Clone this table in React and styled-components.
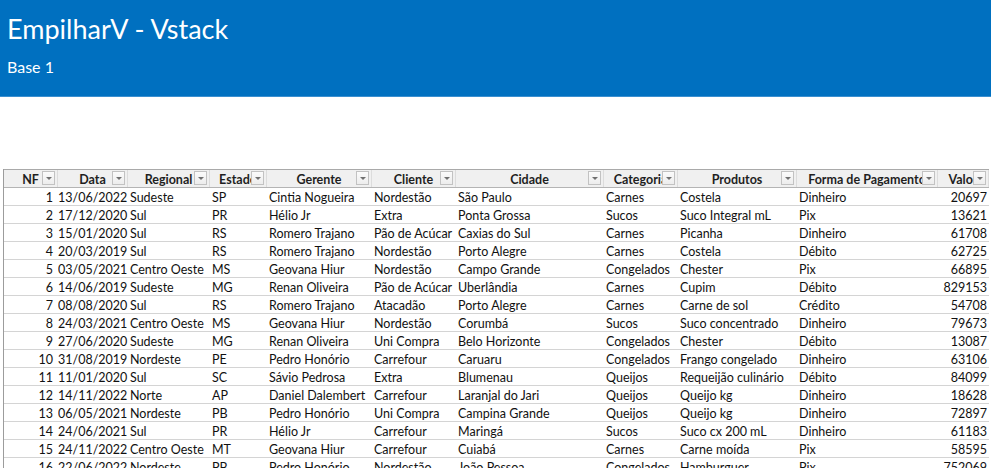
import React from "react";
import styled, { createGlobalStyle } from "styled-components";

const Global = createGlobalStyle`
  html, body { margin: 0; padding: 0; background: #ffffff; }
  body { font-family: Lato, "Open Sans", Arial, sans-serif; overflow: hidden; }
`;

const Page = styled.div`
  width: 991px;
  height: 468px;
  overflow: hidden;
  background: #fff;
`;

const Banner = styled.header`
  height: 97px;
  background: #0070c0;
  border-bottom: 1px solid #3a8fd0;
  color: #ffffff;
  padding: 12px 0 0 7px;
  box-sizing: border-box;
  display: flex;
  flex-direction: column;
`;

const Title = styled.h1`
  margin: 0;
  font-family: Lato, "Open Sans", sans-serif;
  font-weight: 400;
  font-size: 27px;
  line-height: 33px;
`;

const Subtitle = styled.div`
  margin-top: 12px;
  font-family: Lato, "Open Sans", sans-serif;
  font-size: 16px;
  line-height: 20px;
`;

const TableWrap = styled.div`
  margin: 72px 0 0 3px;
  width: 986px;
  border-left: 1px solid #9c9c9c;
  box-sizing: border-box;
`;

const COLS = "54px 70px 82px 57px 105px 84px 148px 74px 119px 141px 51px";

const HeaderRow = styled.div`
  display: grid;
  grid-template-columns: ${COLS};
  height: 19px;
  box-sizing: border-box;
  border-top: 1px solid #a9a9a9;
  border-bottom: 1px solid #b4b4b4;
  background: #f0f0f0;
`;

const HeadCell = styled.div`
  position: relative;
  overflow: hidden;
  white-space: nowrap;
  text-align: center;
  font-weight: 700;
  font-size: 12.5px;
  line-height: 17px;
  padding-top: 1px;
  box-sizing: border-box;
  color: #1f1f1f;
  border-right: 1px solid #dcdcdc;
`;

const DropBtn = styled.span`
  position: absolute;
  right: 2px;
  top: 1px;
  width: 13px;
  height: 14px;
  box-sizing: border-box;
  border: 1px solid #c2c2c2;
  background: linear-gradient(#fbfbfb, #ededed);
  display: flex;
  align-items: center;
  justify-content: center;
  &::after {
    content: "";
    border-left: 3px solid transparent;
    border-right: 3px solid transparent;
    border-top: 3px solid #707070;
  }
`;

const Row = styled.div`
  display: grid;
  grid-template-columns: ${COLS};
  height: 18px;
  box-sizing: border-box;
  border-bottom: 1px solid #d4d4d4;
`;

const Cell = styled.div`
  overflow: hidden;
  white-space: nowrap;
  padding: 2px 2px 0 ${(p) => (p.$num ? "0" : "2px")};
  font-size: 12.5px;
  line-height: 15px;
  color: #111;
  text-align: ${(p) => (p.$num ? "right" : "left")};
  &:first-child {
    padding-right: 5px;
  }
`;

const headers = [
  "NF",
  "Data",
  "Regional",
  "Estado",
  "Gerente",
  "Cliente",
  "Cidade",
  "Categoria",
  "Produtos",
  "Forma de Pagamento",
  "Valor",
];

const numeric = [true, true, false, false, false, false, false, false, false, false, true];

const rows = [
  ["1", "13/06/2022", "Sudeste", "SP", "Cintia Nogueira", "Nordestão", "São Paulo", "Carnes", "Costela", "Dinheiro", "20697"],
  ["2", "17/12/2020", "Sul", "PR", "Hélio Jr", "Extra", "Ponta Grossa", "Sucos", "Suco Integral mL", "Pix", "13621"],
  ["3", "15/01/2020", "Sul", "RS", "Romero Trajano", "Pão de Acúcar", "Caxias do Sul", "Carnes", "Picanha", "Dinheiro", "61708"],
  ["4", "20/03/2019", "Sul", "RS", "Romero Trajano", "Nordestão", "Porto Alegre", "Carnes", "Costela", "Débito", "62725"],
  ["5", "03/05/2021", "Centro Oeste", "MS", "Geovana Hiur", "Nordestão", "Campo Grande", "Congelados", "Chester", "Pix", "66895"],
  ["6", "14/06/2019", "Sudeste", "MG", "Renan Oliveira", "Pão de Acúcar", "Uberlândia", "Carnes", "Cupim", "Débito", "829153"],
  ["7", "08/08/2020", "Sul", "RS", "Romero Trajano", "Atacadão", "Porto Alegre", "Carnes", "Carne de sol", "Crédito", "54708"],
  ["8", "24/03/2021", "Centro Oeste", "MS", "Geovana Hiur", "Nordestão", "Corumbá", "Sucos", "Suco concentrado", "Dinheiro", "79673"],
  ["9", "27/06/2020", "Sudeste", "MG", "Renan Oliveira", "Uni Compra", "Belo Horizonte", "Congelados", "Chester", "Débito", "13087"],
  ["10", "31/08/2019", "Nordeste", "PE", "Pedro Honório", "Carrefour", "Caruaru", "Congelados", "Frango congelado", "Dinheiro", "63106"],
  ["11", "11/01/2020", "Sul", "SC", "Sávio Pedrosa", "Extra", "Blumenau", "Queijos", "Requeijão culinário", "Débito", "84099"],
  ["12", "14/11/2022", "Norte", "AP", "Daniel Dalembert", "Carrefour", "Laranjal do Jari", "Queijos", "Queijo kg", "Dinheiro", "18628"],
  ["13", "06/05/2021", "Nordeste", "PB", "Pedro Honório", "Uni Compra", "Campina Grande", "Queijos", "Queijo kg", "Dinheiro", "72897"],
  ["14", "24/06/2021", "Sul", "PR", "Hélio Jr", "Carrefour", "Maringá", "Sucos", "Suco cx 200 mL", "Dinheiro", "61183"],
  ["15", "24/11/2022", "Centro Oeste", "MT", "Geovana Hiur", "Carrefour", "Cuiabá", "Carnes", "Carne moída", "Pix", "58595"],
  ["16", "22/06/2022", "Nordeste", "PB", "Pedro Honório", "Nordestão", "João Pessoa", "Congelados", "Hamburguer", "Pix", "752069"],
];

export default function App() {
  return (
    <Page>
      <Global />
      <Banner>
        <Title>EmpilharV - Vstack</Title>
        <Subtitle>Base 1</Subtitle>
      </Banner>
      <TableWrap>
        <HeaderRow>
          {headers.map((h) => (
            <HeadCell key={h}>
              {h}
              <DropBtn />
            </HeadCell>
          ))}
        </HeaderRow>
        {rows.map((r) => (
          <Row key={r[0]}>
            {r.map((v, i) => (
              <Cell key={i} $num={numeric[i]}>
                {v}
              </Cell>
            ))}
          </Row>
        ))}
      </TableWrap>
    </Page>
  );
}
